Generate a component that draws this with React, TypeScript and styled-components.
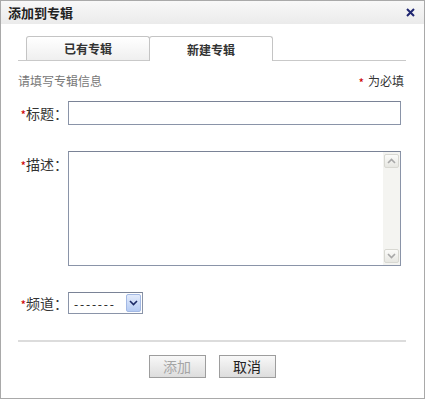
import React from 'react';
import styled, { createGlobalStyle } from 'styled-components';

const GlobalStyle = createGlobalStyle`
  html, body {
    margin: 0;
    padding: 0;
    background: #fff;
  }
  body {
    font-family: 'Noto Sans CJK SC', 'Noto Sans', sans-serif;
    color: #333;
  }
`;

const StyledDialog = styled.div`
  width: 425px;
  height: 399px;
  box-sizing: border-box;
  border: 1px solid #a9a9a9;
  display: flex;
  flex-direction: column;
  background: #fff;
`;

const StyledTitleBar = styled.div`
  height: 23px;
  flex-shrink: 0;
  display: flex;
  align-items: center;
  justify-content: space-between;
  padding: 0 9px 0 7px;
  background: linear-gradient(#f8f8f8, #ebebeb);
  font-size: 13px;
  font-weight: bold;
  color: #222;
`;

const StyledClose = styled.button`
  border: none;
  background: none;
  padding: 0;
  width: 9px;
  height: 9px;
  display: flex;
  cursor: pointer;
`;

const StyledBody = styled.div`
  flex: 1;
  display: flex;
  flex-direction: column;
  padding: 12px 18px 0 17px;
`;

const StyledTabBar = styled.div`
  display: flex;
  align-items: flex-end;
  height: 24px;
  flex-shrink: 0;
  padding-left: 8px;
  border-bottom: 1px solid #c9c9c9;
`;

const StyledTab = styled.div<{ active?: boolean }>`
  width: 124px;
  height: ${({ active }) => (active ? '25px' : '24px')};
  margin-bottom: ${({ active }) => (active ? '-1px' : '0')};
  box-sizing: border-box;
  border: 1px solid #c4c4c4;
  border-bottom: none;
  border-radius: 3px 3px 0 0;
  display: flex;
  align-items: center;
  justify-content: center;
  font-size: 12px;
  font-weight: bold;
  color: #333;
  background: ${({ active }) => (active ? '#fff' : 'linear-gradient(#ffffff, #efefef)')};
  & + & {
    margin-left: -1px;
  }
`;

const StyledHintRow = styled.div`
  margin-top: 13px;
  height: 14px;
  display: flex;
  justify-content: space-between;
  font-size: 12px;
  line-height: 14px;
  color: #777;
`;

const StyledRequiredNote = styled.span`
  display: flex;
  align-items: center;
  gap: 4px;
  color: #333;
  margin-right: 2px;
`;

// the asterisk glyph sits high, so it is pushed down to mid height
const StyledStar = styled.span`
  display: inline-block;
  color: #c00;
  font-size: 12px;
  line-height: 12px;
  padding-top: 4px;
`;

const StyledFieldRow = styled.div<{ gap: number }>`
  margin-top: ${({ gap }) => gap}px;
  display: flex;
  align-items: flex-start;
`;

const StyledLabel = styled.label<{ lineHeight: number }>`
  width: 50px;
  height: ${({ lineHeight }) => lineHeight}px;
  flex-shrink: 0;
  box-sizing: border-box;
  display: flex;
  align-items: center;
  justify-content: flex-end;
  font-size: 14px;
  line-height: ${({ lineHeight }) => lineHeight}px;
  color: #333;
  white-space: nowrap;
`;

const StyledTextInput = styled.input`
  width: 333px;
  height: 24px;
  box-sizing: border-box;
  border: 1px solid #8a94a8;
  border-top-color: #7a8396;
  padding: 0 4px;
  font-size: 13px;
  outline: none;
`;

const StyledTextareaBox = styled.div`
  width: 333px;
  height: 115px;
  box-sizing: border-box;
  border: 1px solid #8a94a8;
  border-top-color: #7a8396;
  display: flex;
`;

const StyledTextarea = styled.textarea`
  flex: 1;
  border: none;
  outline: none;
  resize: none;
  padding: 2px 4px;
  font-size: 13px;
  font-family: inherit;
`;

const StyledScrollTrack = styled.div`
  width: 17px;
  flex-shrink: 0;
  background: #f4f4f1;
  display: flex;
  flex-direction: column;
  justify-content: space-between;
  align-items: center;
  padding: 2px 0;
  box-sizing: border-box;
`;

const StyledScrollButton = styled.div`
  width: 15px;
  height: 14px;
  box-sizing: border-box;
  border: 1px solid #d8d8d2;
  border-radius: 2px;
  background: linear-gradient(#fbfbf9, #e7e7e2);
  display: flex;
  align-items: center;
  justify-content: center;
`;

const StyledSelectBox = styled.div`
  width: 75px;
  height: 22px;
  box-sizing: border-box;
  border: 1px solid #8a94a8;
  border-top-color: #7a8396;
  display: flex;
  align-items: center;
  background: #fff;
`;

const StyledSelectText = styled.span`
  flex: 1;
  padding-left: 5px;
  font-size: 12px;
  letter-spacing: 1.8px;
  color: #111;
`;

const StyledDropButton = styled.div`
  width: 15px;
  height: 18px;
  margin-right: 1px;
  box-sizing: border-box;
  border: 1px solid #a3b9e4;
  border-radius: 2px;
  background: linear-gradient(#e3ebfb, #b5cbf3);
  display: flex;
  align-items: center;
  justify-content: center;
`;

const StyledSeparator = styled.div`
  margin-top: 26px;
  height: 2px;
  flex-shrink: 0;
  background: #dcdcdc;
`;

const StyledButtonRow = styled.div`
  margin-top: 13px;
  display: flex;
  justify-content: center;
  gap: 13px;
`;

const StyledButton = styled.button`
  width: 57px;
  height: 23px;
  padding: 0;
  box-sizing: border-box;
  border: 1px solid #9d9d9d;
  background: linear-gradient(#f8f8f8, #dddddd);
  font-family: inherit;
  font-size: 14px;
  line-height: 21px;
  color: #222;
  &:disabled {
    color: #a5a5a5;
  }
`;

const Chevron = ({ up, color }: { up?: boolean; color: string }) => (
  <svg width="9" height="6" viewBox="0 0 9 6">
    <polyline
      points={up ? '1,5 4.5,1.5 8,5' : '1,1 4.5,4.5 8,1'}
      fill="none"
      stroke={color}
      strokeWidth="1.6"
    />
  </svg>
);

const Required = ({ text }: { text: string }) => (
  <>
    <StyledStar>*</StyledStar>
    {text}
  </>
);

const App = () => (
  <>
    <GlobalStyle />
    <StyledDialog>
      <StyledTitleBar>
        <span>添加到专辑</span>
        <StyledClose aria-label="关闭">
          <svg width="9" height="9" viewBox="0 0 9 9">
            <path d="M1 1 L8 8 M8 1 L1 8" stroke="#1f2670" strokeWidth="2" />
          </svg>
        </StyledClose>
      </StyledTitleBar>
      <StyledBody>
        <StyledTabBar>
          <StyledTab>已有专辑</StyledTab>
          <StyledTab active>新建专辑</StyledTab>
        </StyledTabBar>
        <StyledHintRow>
          <span>请填写专辑信息</span>
          <StyledRequiredNote>
            <StyledStar>*</StyledStar>
            <span>为必填</span>
          </StyledRequiredNote>
        </StyledHintRow>
        <StyledFieldRow gap={13}>
          <StyledLabel lineHeight={24}>
            <Required text="标题：" />
          </StyledLabel>
          <StyledTextInput />
        </StyledFieldRow>
        <StyledFieldRow gap={26}>
          <StyledLabel lineHeight={26}>
            <Required text="描述：" />
          </StyledLabel>
          <StyledTextareaBox>
            <StyledTextarea />
            <StyledScrollTrack>
              <StyledScrollButton>
                <Chevron up color="#a8a8a8" />
              </StyledScrollButton>
              <StyledScrollButton>
                <Chevron color="#a8a8a8" />
              </StyledScrollButton>
            </StyledScrollTrack>
          </StyledTextareaBox>
        </StyledFieldRow>
        <StyledFieldRow gap={26}>
          <StyledLabel lineHeight={22}>
            <Required text="频道：" />
          </StyledLabel>
          <StyledSelectBox>
            <StyledSelectText>-------</StyledSelectText>
            <StyledDropButton>
              <Chevron color="#1c2a66" />
            </StyledDropButton>
          </StyledSelectBox>
        </StyledFieldRow>
        <StyledSeparator />
        <StyledButtonRow>
          <StyledButton disabled>添加</StyledButton>
          <StyledButton>取消</StyledButton>
        </StyledButtonRow>
      </StyledBody>
    </StyledDialog>
  </>
);

export default App;
